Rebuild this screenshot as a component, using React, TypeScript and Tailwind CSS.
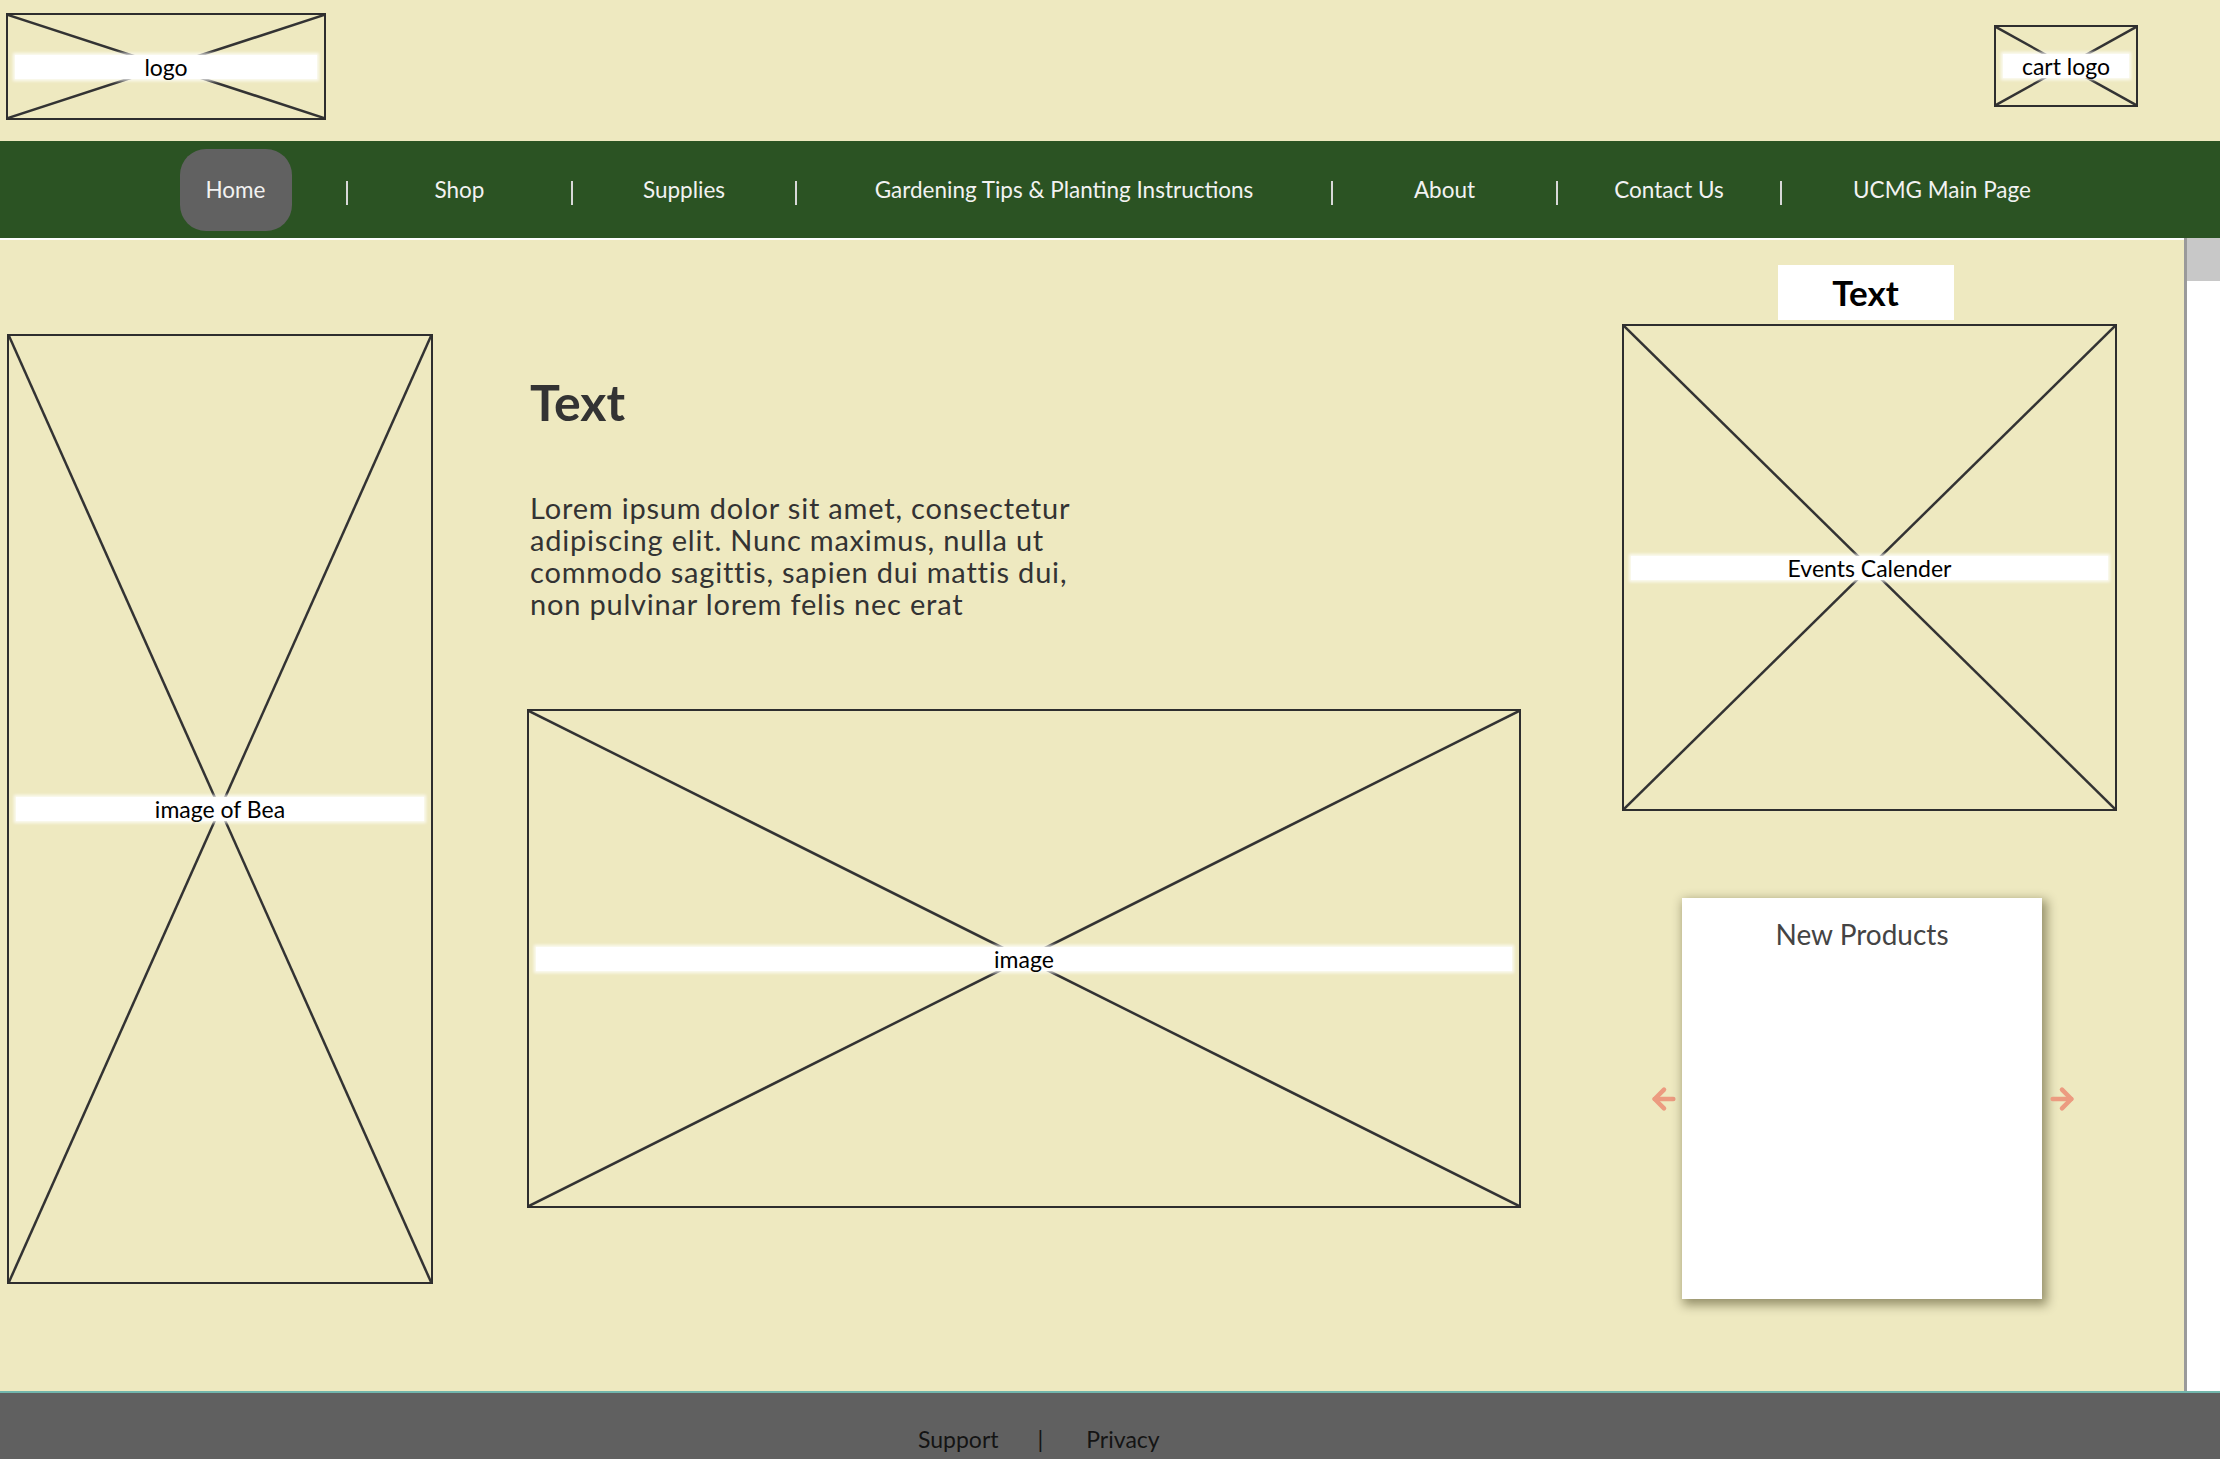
import { ArrowLeft, ArrowRight } from 'lucide-react';

const NAV = [
  { label: 'Home', w: 'w-[221px]', active: true },
  { label: 'Shop', w: 'w-[223px]' },
  { label: 'Supplies', w: 'w-[222px]' },
  { label: 'Gardening Tips & Planting Instructions', w: 'w-[534px]' },
  { label: 'About', w: 'w-[223px]' },
  { label: 'Contact Us', w: 'w-[222px]' },
  { label: 'UCMG Main Page', w: 'w-[320px]' },
];

const Placeholder = ({ label, className }: { label: string; className: string }) => {
  return (
    <div className={`relative flex items-center justify-center border-2 border-[#2e2e2e] ${className}`}>
      <svg className="absolute inset-0 h-full w-full" preserveAspectRatio="none" viewBox="0 0 100 100">
        <line x1="0" y1="0" x2="100" y2="100" stroke="#333" strokeWidth="2.5" vectorEffect="non-scaling-stroke" />
        <line x1="100" y1="0" x2="0" y2="100" stroke="#333" strokeWidth="2.5" vectorEffect="non-scaling-stroke" />
      </svg>
      <div className="relative mx-[7px] flex h-[24px] w-full items-center justify-center bg-white text-[23px] leading-[24px] text-black shadow-[0_0_3px_2px_rgba(255,255,255,0.8)]">
        {label}
      </div>
    </div>
  );
};

const App = () => {
  return (
    <div className="w-[2220px] font-['Lato','Liberation_Sans',sans-serif]">
      <header className="flex h-[141px] justify-between bg-[#eee9c0] pl-[6px] pr-[82px]">
        <Placeholder label="logo" className="mt-[13px] h-[107px] w-[320px]" />
        <Placeholder label="cart logo" className="mt-[25px] h-[82px] w-[144px]" />
      </header>

      <nav className="flex h-[97px] items-center bg-[#2b5323] pl-[125px] text-[22.5px] text-[#f2f2f2]">
        {NAV.map((item, i) => (
          <div key={item.label} className="flex items-center">
            {i > 0 && <div className="mt-[7px] h-[24px] w-[2px] bg-[#d8d8d8]" />}
            <div className={`flex justify-center ${item.w}`}>
              {item.active ? (
                <span className="flex h-[82px] w-[112px] items-center justify-center rounded-[26px] bg-[#616161]">
                  {item.label}
                </span>
              ) : (
                <span>{item.label}</span>
              )}
            </div>
          </div>
        ))}
      </nav>

      <div className="flex h-[1153px]">
        <main className="flex w-[2184px] border-t-2 border-white bg-[#eee9c0] pl-[7px]">
          <Placeholder label="image of Bea" className="mt-[94px] h-[950px] w-[426px]" />

          <section className="ml-[94px] w-[994px]">
            <h1 className="mt-[137px] pl-[3px] text-[50px] font-bold leading-none text-[#333]">Text</h1>
            <p className="mt-[65px] pl-[3px] text-[29px] leading-[32px] tracking-[0.8px] text-[#333]">
              <span className="block">Lorem ipsum dolor sit amet, consectetur</span>
              <span className="block">adipiscing elit. Nunc maximus, nulla ut</span>
              <span className="block">commodo sagittis, sapien dui mattis dui,</span>
              <span className="block">non pulvinar lorem felis nec erat</span>
            </p>
            <Placeholder label="image" className="mt-[89px] h-[499px] w-[994px]" />
          </section>

          <aside className="ml-[101px] flex w-[495px] flex-col items-center">
            <div className="mr-[8px] mt-[25px] flex h-[55px] w-[176px] items-center justify-center bg-white text-[35px] font-bold text-black">
              Text
            </div>
            <Placeholder label="Events Calender" className="mt-[4px] h-[487px] w-[495px]" />
            <div className="mt-[87px] flex w-full items-center pl-[26px]">
              <ArrowLeft className="h-[32px] w-[32px] text-[#ec9b80]" strokeWidth={3.4} />
              <div className="ml-[2px] h-[401px] w-[360px] bg-white pt-[15px] text-center text-[28px] text-[#444] shadow-[3px_4px_10px_2px_rgba(40,35,0,0.45)]">
                New Products
              </div>
              <ArrowRight className="ml-[4px] h-[32px] w-[32px] text-[#ec9b80]" strokeWidth={3.4} />
            </div>
          </aside>
        </main>
        <div className="w-[36px] border-l-[3px] border-[#9a9a9a] bg-white">
          <div className="h-[43px] bg-[#c8c8c8]" />
        </div>
      </div>

      <footer className="flex h-[68px] border-t-2 border-[#72b6ac] bg-[#606060] pl-[918px] pt-[29px] text-[23px] text-[#141414]">
        <span>Support</span>
        <span className="ml-[39px]">|</span>
        <span className="ml-[43px]">Privacy</span>
      </footer>
    </div>
  );
};

export default App;
